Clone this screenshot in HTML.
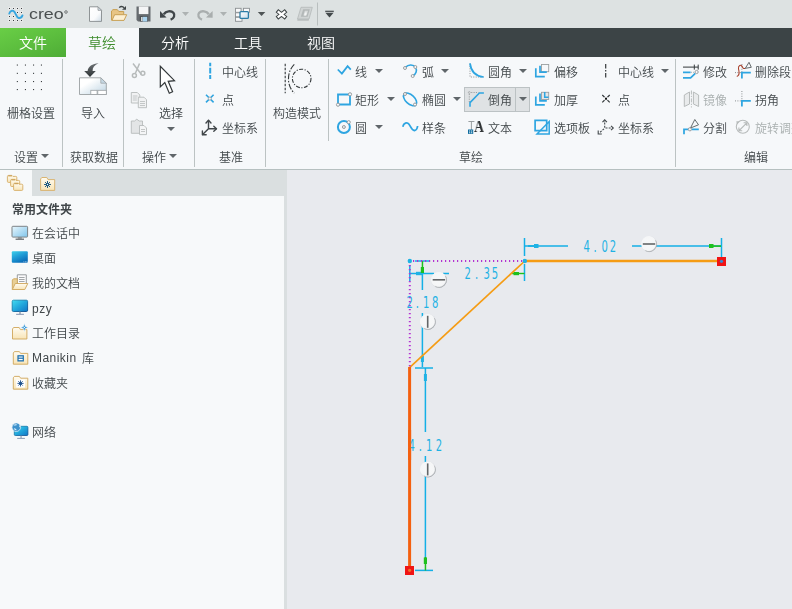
<!DOCTYPE html>
<html><head><meta charset="utf-8">
<style>
*{box-sizing:border-box;margin:0;padding:0}
html,body{width:792px;height:609px;overflow:hidden;background:#e8eaee}
body{position:relative;font-family:"Liberation Sans","Noto Sans CJK SC",sans-serif;font-size:12px;color:#41474a;font-weight:350}
.abs{position:absolute}
#title{left:0;top:0;width:792px;height:28px;background:#dde2e2}
#tabs{left:0;top:28px;width:792px;height:29px;background:#3c4446}
#tabfile{left:0;top:28px;width:66px;height:29px;background:linear-gradient(160deg,#69ce46,#5cbe3e 50%,#4eac36)}
#tabact{left:66px;top:28px;width:73px;height:29px;background:#f6f8fa}
.tab{will-change:transform;position:absolute;top:29px;height:29px;line-height:29px;font-size:14px;color:#fff;text-align:center;width:60px}
#ribbon{left:0;top:57px;width:792px;height:112px;background:#f6f8fa}
#ribline{left:0;top:169px;width:792px;height:1px;background:#b6c0c0}
.sep{position:absolute;width:1px;background:#bcc3c3;top:59px;height:107.5px}
.t{position:absolute;will-change:transform;white-space:nowrap;line-height:16px;height:16px;font-size:12px;color:#41474a;font-weight:350}
.c{transform:translateX(-50%)}
.g{color:#a9afaf}
.dd{position:absolute;margin-left:0.5px;width:0;height:0;border-left:4px solid transparent;border-right:4px solid transparent;border-top:4px solid #60666a}
#panelhead{left:0;top:170px;width:287px;height:26px;background:#dadfe0}
#panel{left:0;top:196px;width:284px;height:413px;background:#f7f9fa}
#paneledge{left:284px;top:196px;width:3px;height:413px;background:#dadfe0}
#ptab{left:0;top:170px;width:32px;height:26px;background:#f7f9fa}
svg{position:absolute;overflow:visible}
</style></head><body>
<div class="abs" id="title"></div>
<div class="abs" id="tabs"></div>
<div class="abs" id="tabfile"></div>
<div class="abs" id="tabact"></div>
<div class="tab" style="left:3px">文件</div>
<div class="tab" style="left:72px;color:#3d8c2b">草绘</div>
<div class="tab" style="left:145px">分析</div>
<div class="tab" style="left:218px">工具</div>
<div class="tab" style="left:290.5px">视图</div>
<div class="t" style="left:29px;top:4px;line-height:20px;height:20px;font-size:15px;color:#4a4f50;transform:scaleX(1.19);transform-origin:0 0">creo</div>


<!-- title bar icons -->
<svg style="left:0;top:0" width="792" height="28" viewBox="0 0 792 28">
<defs>
<linearGradient id="docg" x1="0" y1="0" x2="1" y2="1"><stop offset="0" stop-color="#ffffff"/><stop offset="0.6" stop-color="#fafbfc"/><stop offset="1" stop-color="#cfdce6"/></linearGradient>
<linearGradient id="wing" x1="0" y1="0" x2="1" y2="1"><stop offset="0" stop-color="#ffffff"/><stop offset="1" stop-color="#c8dcea"/></linearGradient>
</defs>
<!-- creo logo dots -->
<g><rect x="8" y="7" width="3" height="3" fill="#eceeee" opacity="0.7"/><rect x="9" y="8" width="1" height="1" fill="#3a3f41"/><rect x="12" y="7" width="3" height="3" fill="#eceeee" opacity="0.7"/><rect x="13" y="8" width="1" height="1" fill="#3a3f41"/><rect x="16" y="7" width="3" height="3" fill="#eceeee" opacity="0.7"/><rect x="17" y="8" width="1" height="1" fill="#3a3f41"/><rect x="20" y="7" width="3" height="3" fill="#eceeee" opacity="0.7"/><rect x="21" y="8" width="1" height="1" fill="#3a3f41"/><rect x="16" y="11" width="3" height="3" fill="#eceeee" opacity="0.7"/><rect x="17" y="12" width="1" height="1" fill="#3a3f41"/><rect x="20" y="11" width="3" height="3" fill="#eceeee" opacity="0.7"/><rect x="21" y="12" width="1" height="1" fill="#3a3f41"/><rect x="8" y="15" width="3" height="3" fill="#eceeee" opacity="0.7"/><rect x="9" y="16" width="1" height="1" fill="#3a3f41"/><rect x="12" y="15" width="3" height="3" fill="#eceeee" opacity="0.7"/><rect x="13" y="16" width="1" height="1" fill="#3a3f41"/><rect x="8" y="19" width="3" height="3" fill="#eceeee" opacity="0.7"/><rect x="9" y="20" width="1" height="1" fill="#3a3f41"/><rect x="12" y="19" width="3" height="3" fill="#eceeee" opacity="0.7"/><rect x="13" y="20" width="1" height="1" fill="#3a3f41"/><rect x="16" y="19" width="3" height="3" fill="#eceeee" opacity="0.7"/><rect x="17" y="20" width="1" height="1" fill="#3a3f41"/><rect x="20" y="19" width="3" height="3" fill="#eceeee" opacity="0.7"/><rect x="21" y="20" width="1" height="1" fill="#3a3f41"/></g>
<path d="M9.300 13.600C9.800 11.400 11.600 10.300 13.300 10.900C15.800 11.800 16 17.600 18.600 18C20.400 18.300 21.900 17 22.500 15.400" fill="none" stroke="#36a6e0" stroke-width="1.900" stroke-linecap="round"/>
<circle cx="66" cy="12" r="1.3" fill="none" stroke="#4a4f50" stroke-width="0.7"/>
<!-- new doc -->
<path d="M89.5 6.8H98L101.5 10.3V21.4H89.5Z" fill="url(#docg)" stroke="#8f9496" stroke-width="1"/>
<path d="M98 6.8V10.3H101.5Z" fill="#d5e0ea" stroke="#8f9496" stroke-width="0.8"/>
<!-- open folder -->
<path d="M111.500 20.400V11L113 9.600H117.300L118.800 11.500H123.700V14.600" fill="#e8c585" stroke="#c8a055" stroke-width="1"/>
<path d="M112 20.400L114.600 14.700H126.700L124 20.400Z" fill="#fdf0d4" stroke="#c8a055" stroke-width="1"/>
<path d="M119.200 7.600C120.500 6.200 122.500 6 124.200 7.800" fill="none" stroke="#3f4546" stroke-width="1.300"/>
<path d="M122 9.800H126V6Z" fill="#3f4546"/>
<!-- save -->
<path d="M136.5 6.5H150.5V21.5H138L136.5 20Z" fill="#666b6f"/>
<rect x="138.8" y="6.5" width="9.6" height="7.6" fill="#f4f5f6"/>
<rect x="139.8" y="16" width="8" height="5.5" fill="#4c5154"/>
<rect x="142.6" y="16.8" width="4.6" height="4.7" fill="#a9d3ee"/>
<rect x="141.2" y="17" width="1.2" height="4" fill="#f4f5f6"/>
<!-- undo -->
<path d="M163.8 14.2C166.0 11.0 171.0 10.2 173.4 12.8C175.4 15.2 174.0 18.4 170.6 19.7" fill="none" stroke="#41474a" stroke-width="2.4"/>
<path d="M160.0 11.0L160.0 17.8L166.6 17.4Z" fill="#41474a"/>
<path d="M182 12.100H189L185.500 16Z" fill="#adb2b2"/>
<!-- redo -->
<path d="M208.8 14.2C206.6 11.0 201.6 10.2 199.2 12.8C197.2 15.2 198.6 18.4 202.0 19.7" fill="none" stroke="#a9aeae" stroke-width="2.4"/>
<path d="M212.6 11.0L212.6 17.8L206.0 17.4Z" fill="#a9aeae"/>
<path d="M220 12.100H227L223.500 16Z" fill="#adb2b2"/>
<!-- windows -->
<g fill="#f8f9fa" stroke="#8b9092" stroke-width="0.9">
<rect x="235.500" y="8.300" width="5.600" height="4"/>
<rect x="243.500" y="8.300" width="6" height="4"/>
<rect x="235.500" y="12.800" width="5" height="4"/>
<rect x="235.500" y="17.300" width="6.500" height="4"/>
</g>
<rect x="240" y="11.600" width="8.400" height="6.800" rx="1" fill="url(#wing)" stroke="#2b7ca6" stroke-width="1.300"/>
<path d="M257.800 12H265.300L261.550 16Z" fill="#4e5455"/>
<!-- close X -->
<path d="M276.900 10.700L286.100 18.100M286.100 10.700L276.900 18.100" stroke="#3f4546" stroke-width="4.200" fill="none"/>
<path d="M277.700 11.350L285.300 17.450M285.300 11.350L277.700 17.450" stroke="#ffffff" stroke-width="2.300" fill="none"/>
<!-- grey icon -->
<path d="M301 7.300H312.300L309 19H297.500Z" fill="#d0d4d4" stroke="#b4b9b9" stroke-width="0.8"/>
<path d="M297.500 19L309 19L308.700 20.800H297.300Z" fill="#b9bebe"/>
<path d="M303.200 9.200H309.800L307.600 16.800H300.800Z" fill="#b3b8b8"/>
<path d="M304.800 10.800H308L306.600 15.600H303.400Z" fill="#d9dcdc"/>
<path d="M305 12.500H306.800L306 15.600H304.100Z" fill="#f2f3f3"/>
<rect x="317" y="2.500" width="1" height="23" fill="#b9bfbf"/>
<rect x="325.200" y="10.700" width="8.600" height="1.200" fill="#43494b"/>
<path d="M325.400 12.800H333.600L329.500 17.600Z" fill="#43494b"/>
</svg>

<div class="abs" id="ribbon"></div>
<div class="abs" id="ribline"></div>
<div class="sep" style="left:62px"></div>
<div class="sep" style="left:123px"></div>
<div class="sep" style="left:194px"></div>
<div class="sep" style="left:265px"></div>
<div class="sep" style="left:328px;height:82px"></div>
<div class="sep" style="left:675px"></div>

<!-- group 1 -->
<div class="t c" style="left:31px;top:106px">栅格设置</div>
<div class="t" style="left:14px;top:150px">设置</div><div class="dd" style="left:40px;top:154px"></div>
<!-- group 2 -->
<div class="t c" style="left:93px;top:106px">导入</div>
<div class="t c" style="left:94px;top:150px">获取数据</div>
<!-- group 3 -->
<div class="t c" style="left:171px;top:106px">选择</div><div class="dd" style="left:166px;top:127px"></div>
<div class="t" style="left:142px;top:150px">操作</div><div class="dd" style="left:168px;top:154px"></div>
<!-- group 4 -->
<div class="t" style="left:222px;top:65px">中心线</div>
<div class="t" style="left:222px;top:93px">点</div>
<div class="t" style="left:222px;top:121px">坐标系</div>
<div class="t c" style="left:231px;top:150px">基准</div>
<!-- group 5 -->
<div class="t c" style="left:297px;top:106px">构造模式</div>
<div class="t" style="left:355px;top:65px">线</div><div class="dd" style="left:374px;top:69px"></div>
<div class="t" style="left:355px;top:93px">矩形</div><div class="dd" style="left:386px;top:97px"></div>
<div class="t" style="left:355px;top:121px">圆</div><div class="dd" style="left:374px;top:125px"></div>
<div class="t" style="left:422px;top:65px">弧</div><div class="dd" style="left:440px;top:69px"></div>
<div class="t" style="left:422px;top:93px">椭圆</div><div class="dd" style="left:452px;top:97px"></div>
<div class="t" style="left:422px;top:121px">样条</div>
<div class="abs" style="left:464px;top:87px;width:66px;height:25px;background:#dfe2e4;border:1px solid #bcc2c4"></div>
<div class="abs" style="left:515px;top:87px;width:1px;height:25px;background:#bcc2c4"></div>
<div class="t" style="left:488px;top:65px">圆角</div><div class="dd" style="left:518px;top:69px"></div>
<div class="t" style="left:488px;top:93px">倒角</div><div class="dd" style="left:518px;top:97px"></div>
<div class="t" style="left:488px;top:121px">文本</div>
<div class="t" style="left:554px;top:65px">偏移</div>
<div class="t" style="left:554px;top:93px">加厚</div>
<div class="t" style="left:554px;top:121px">选项板</div>
<div class="t" style="left:618px;top:65px">中心线</div><div class="dd" style="left:660px;top:69px"></div>
<div class="t" style="left:618px;top:93px">点</div>
<div class="t" style="left:618px;top:121px">坐标系</div>
<div class="t c" style="left:471px;top:150px">草绘</div>
<!-- group 6 -->
<div class="t" style="left:703px;top:65px">修改</div>
<div class="t g" style="left:703px;top:93px">镜像</div>
<div class="t" style="left:703px;top:121px">分割</div>
<div class="t" style="left:755px;top:65px">删除段</div>
<div class="t" style="left:755px;top:93px">拐角</div>
<div class="t g" style="left:755px;top:121px">旋转调整大小</div>
<div class="t c" style="left:756px;top:150px">编辑</div>


<!-- ribbon icons -->
<svg style="left:0;top:57px" width="792" height="112" viewBox="0 57 792 112">
<defs>
<linearGradient id="impg" x1="0" y1="0" x2="1" y2="1"><stop offset="0.3" stop-color="#ffffff"/><stop offset="1" stop-color="#bcd3e2"/></linearGradient>
<linearGradient id="arrg" x1="0" y1="0" x2="0" y2="1"><stop offset="0" stop-color="#6d7275"/><stop offset="1" stop-color="#2e3335"/></linearGradient>
</defs>
<g fill="#3a3f41"><rect x="16.8" y="64.5" width="1.1" height="1.1"/><rect x="16.8" y="72.8" width="1.1" height="1.1"/><rect x="16.8" y="81.0" width="1.1" height="1.1"/><rect x="16.8" y="89.0" width="1.1" height="1.1"/><rect x="24.9" y="64.5" width="1.1" height="1.1"/><rect x="24.9" y="72.8" width="1.1" height="1.1"/><rect x="24.9" y="81.0" width="1.1" height="1.1"/><rect x="24.9" y="89.0" width="1.1" height="1.1"/><rect x="33.0" y="64.5" width="1.1" height="1.1"/><rect x="33.0" y="72.8" width="1.1" height="1.1"/><rect x="33.0" y="81.0" width="1.1" height="1.1"/><rect x="33.0" y="89.0" width="1.1" height="1.1"/><rect x="40.9" y="64.5" width="1.1" height="1.1"/><rect x="40.9" y="72.8" width="1.1" height="1.1"/><rect x="40.9" y="81.0" width="1.1" height="1.1"/><rect x="40.9" y="89.0" width="1.1" height="1.1"/></g>
<!-- import -->
<path d="M79.5 77.800H100.800L106.300 83.200V94.500H79.500Z" fill="url(#impg)" stroke="#9a9fa1" stroke-width="0.9"/>
<path d="M100.800 77.800V83.200H106.300Z" fill="#c5d8e4" stroke="#9a9fa1" stroke-width="0.7"/>
<rect x="90.800" y="90.300" width="6.300" height="4.200" fill="#fff" stroke="#9a9fa1" stroke-width="0.8"/>
<rect x="97.800" y="90.300" width="8.500" height="4.200" fill="#fff" stroke="#9a9fa1" stroke-width="0.8"/>
<path d="M98.500 63.200C92.500 63.600 88 66.500 87.600 71H84.200L90 77L95.800 71H92.600C92.400 67.500 94.500 64.800 98.500 63.200Z" fill="url(#arrg)"/>
<!-- scissors -->
<g fill="none" stroke="#b7bbbb" stroke-width="1.500">
<path d="M133 63.500L141.500 74.500M139.500 63.500L135.500 73"/>
<circle cx="134.400" cy="75.600" r="2"/><circle cx="142.800" cy="73.300" r="2"/>
</g>
<!-- copy -->
<g fill="#f1f2f3" stroke="#b7bbbb" stroke-width="0.9">
<path d="M131.300 92.500H137.300L139.800 95V103H131.300Z"/>
<path d="M138.300 97.200H144L146.500 99.700V107.700H138.300Z"/>
</g>
<g stroke="#b7bbbb" stroke-width="0.8"><path d="M132.800 96H137.500M132.800 98H136.800M132.800 100H136.800M140 101.500H145M140 103.500H145M140 105.500H145"/></g>
<!-- paste -->
<path d="M131.300 121H134.500L136.800 119.200L139.200 121H142.500V133.300H131.300Z" fill="#e3e5e6" stroke="#b7bbbb" stroke-width="0.9"/>
<path d="M139.500 125.500H144L146.500 128V134.600H139.500Z" fill="#f4f5f6" stroke="#b7bbbb" stroke-width="0.9"/>
<g stroke="#b7bbbb" stroke-width="0.8"><path d="M141 129.500H145M141 131.500H145"/></g>
<!-- cursor -->
<path d="M160.300 66.300V86.900L164.800 82.600L169.300 93.200L172.600 91.700L168.200 81.300L174.500 80.700Z" fill="#ffffff" stroke="#33383a" stroke-width="1.200" stroke-linejoin="miter"/>
<!-- datum centerline -->
<path d="M210.200 62.700V66.300M210.200 67.800V73.500M210.200 74.900V78.900" stroke="#2ea5e1" stroke-width="2" fill="none"/>
<!-- datum point -->
<path d="M206 94.800L213.600 102.400M213.600 94.800L206 102.400" stroke="#2ea5e1" stroke-width="1.600" fill="none"/>
<circle cx="209.800" cy="98.600" r="1.500" fill="#f6f8fa" stroke="#9a9fa1" stroke-width="0.8"/>
<!-- datum csys -->
<g fill="none" stroke="#41474a" stroke-width="1.400" stroke-linecap="round" stroke-linejoin="round">
<path d="M208.500 128.700V120.500M208.500 128.700H216.300M208.500 128.700L202.600 134.500"/>
<path d="M206 123L208.500 120.300L211 123M213.800 126.200L216.500 128.700L213.800 131.200M202.400 131V134.700H206.200"/>
</g>
<!-- construction mode -->
<g fill="none" stroke="#33383a" stroke-width="1.100">
<path d="M285.200 63.700V93.300" stroke-dasharray="2.500 1.500"/>
<path d="M294.300 64.300C286.500 72 286.500 85.500 294.300 93.200" stroke-dasharray="6 1.500 1.500 1.500"/>
<circle cx="301.700" cy="78.500" r="9.300" stroke-dasharray="4 1.500 1.200 1.500"/>
</g>
<!-- line -->
<path d="M337.800 69.500L341.900 73.600L347.600 66.200L350.800 69.600" fill="none" stroke="#2ea5e1" stroke-width="1.750"/>
<!-- rect -->
<path d="M338 94.500H350V104.500H338Z" fill="none" stroke="#2ea5e1" stroke-width="1.800"/>
<circle cx="350" cy="94.300" r="1.600" fill="#f6f8fa" stroke="#8f9496" stroke-width="0.9"/>
<circle cx="338" cy="104.700" r="1.600" fill="#f6f8fa" stroke="#8f9496" stroke-width="0.9"/>
<!-- circle -->
<circle cx="343.900" cy="127" r="6" fill="none" stroke="#2ea5e1" stroke-width="2"/>
<circle cx="343.900" cy="127" r="1.500" fill="#e6e8ea" stroke="#8f9496" stroke-width="0.9"/>
<circle cx="348.700" cy="122.200" r="1.600" fill="#f6f8fa" stroke="#8f9496" stroke-width="0.9"/>
<!-- arc -->
<path d="M405.500 67.300C408.500 64 413.500 64.300 415.600 67.600C417.500 70.600 415.800 74.300 413 75.700" fill="none" stroke="#2ea5e1" stroke-width="1.600"/>
<circle cx="405" cy="68" r="1.500" fill="#f6f8fa" stroke="#8f9496" stroke-width="0.9"/>
<circle cx="415.300" cy="67" r="1.500" fill="#f6f8fa" stroke="#8f9496" stroke-width="0.9"/>
<circle cx="412.700" cy="76" r="1.500" fill="#f6f8fa" stroke="#8f9496" stroke-width="0.9"/>
<!-- ellipse -->
<ellipse cx="410.100" cy="99.400" rx="8" ry="4.500" transform="rotate(43 410.100 99.400)" fill="none" stroke="#2ea5e1" stroke-width="1.600"/>
<circle cx="405" cy="94" r="1.500" fill="#f6f8fa" stroke="#8f9496" stroke-width="0.9"/>
<circle cx="415" cy="104.500" r="1.500" fill="#f6f8fa" stroke="#8f9496" stroke-width="0.9"/>
<!-- spline -->
<path d="M402.800 126.800C403.600 123 407 121.600 409 124.200C411 126.800 411.800 130.800 414.500 130.500C416.500 130.300 417.300 128.300 417.600 126" fill="none" stroke="#2ea5e1" stroke-width="1.800"/>
<!-- fillet -->
<path d="M470 63.500V77H483.500" fill="none" stroke="#8a8f91" stroke-width="1" stroke-dasharray="1 1.400"/>
<path d="M470 63.300C471 71.500 476 76.200 483.600 77" fill="none" stroke="#2ea5e1" stroke-width="1.750"/>
<!-- chamfer -->
<path d="M469.300 102V92.500H478.500" fill="none" stroke="#8a8f91" stroke-width="0.9" stroke-dasharray="1 1.300"/>
<circle cx="469.300" cy="92.500" r="0.900" fill="#f0f1f2" stroke="#8a8f91" stroke-width="0.6"/>
<path d="M470 106.700V102.600L479.400 93H483.900" fill="none" stroke="#2ea5e1" stroke-width="1.600"/>
<!-- text icon -->
<path d="M471.400 121.500V130M468.400 121.500H474.400" stroke="#8f9496" stroke-width="0.9" fill="none"/>
<rect x="468" y="129.500" width="5.200" height="4.400" fill="#0f6c9e"/>
<path d="M469.100 130.400h1.100v1.100h-1.100zM471.100 130.400h1.100v1.100h-1.100zM469.100 132.200h1.100v1.100h-1.100zM471.100 132.200h1.100v1.100h-1.100z" fill="#f2f9fd"/>
<!-- offset -->
<rect x="541.500" y="64.500" width="7.200" height="7.200" fill="none" stroke="#9a9fa1" stroke-width="0.9"/>
<path d="M535.800 68.300V76.700H544.800" fill="none" stroke="#2ea5e1" stroke-width="1.700"/>
<path d="M540 65.800V72.200H546.800" fill="none" stroke="#2ea5e1" stroke-width="1.700"/>
<!-- thicken -->
<rect x="541.500" y="92.300" width="7.200" height="7.200" fill="#e4e6e7" stroke="#9a9fa1" stroke-width="0.9"/>
<path d="M535.800 96.500V104.900H544.800" fill="none" stroke="#2ea5e1" stroke-width="1.700"/>
<path d="M540 93.600V100.800H546.800" fill="none" stroke="#2ea5e1" stroke-width="1.700"/>
<path d="M544.700 92V97.300H548.600" fill="none" stroke="#2ea5e1" stroke-width="1.500"/>
<!-- palette -->
<path d="M535.100 120.300H546.700V130.600H535.100Z" fill="none" stroke="#2ea5e1" stroke-width="1.700"/>
<path d="M549.200 121.500V134.100H537Z" fill="none" stroke="#2ea5e1" stroke-width="1.500" stroke-linejoin="miter"/>
<!-- sketch centerline -->
<path d="M605.700 64V78.500" stroke="#33383a" stroke-width="1.200" stroke-dasharray="4.500 1.500 1.500 1.500" fill="none"/>
<!-- sketch point -->
<path d="M602.300 95L609.700 102.400M609.700 95L602.300 102.400" stroke="#33383a" stroke-width="1.200" fill="none"/>
<circle cx="606" cy="98.700" r="2.100" fill="#f6f8fa"/><rect x="605" y="97.700" width="2" height="2" fill="#111"/>
<!-- sketch csys -->
<g fill="none" stroke="#41474a" stroke-width="1.100">
<path d="M604.700 127.800V121" stroke-dasharray="2 1.200"/>
<path d="M605.500 128H611" stroke-dasharray="2 1.200"/>
<path d="M604 128.800L599.500 132.800" stroke-dasharray="2 1.200"/>
<path d="M602.500 122.200L604.700 119.800L606.900 122.200M611 125.800L613.300 128L611 130.200M598.200 130.500V134H601.800"/>
</g>
<!-- modify -->
<path d="M683 67.100H698.200M694.300 64.600V69.600M698.200 64.600V69.600" stroke="#33383a" stroke-width="1" fill="none"/>
<path d="M683 72.300H690.600M683 77.800H690.600L695.300 73.300" stroke="#2ea5e1" stroke-width="1.700" fill="none"/>
<path d="M691 72.300H695" stroke="#9a9fa1" stroke-width="0.8" stroke-dasharray="1 1"/>
<circle cx="696.600" cy="72" r="1.600" fill="#f6f8fa" stroke="#8f9496" stroke-width="0.9"/>
<!-- delete segment -->
<path d="M735 72.600H741M741.900 64V72" stroke="#8a8f91" stroke-width="1" stroke-dasharray="1 1.400" fill="none"/>
<path d="M741.900 78.600V72.600H750.800" fill="none" stroke="#2ea5e1" stroke-width="1.750"/>
<path d="M736.800 76.500C740.500 75.500 739 71.500 738.500 68.800C738 65.500 741 64 742.300 66.800C743 68.500 744 69 745.500 68.200" fill="none" stroke="#a8402c" stroke-width="1.050"/>
<path d="M745.300 68.300L749 62.300L751.300 67.300Z" fill="#f6f8fa" stroke="#555b5d" stroke-width="0.9"/>
<!-- mirror -->
<g fill="#e9ebec" stroke="#b7bbbb" stroke-width="1">
<path d="M684.300 95L689.500 92V104L684.300 106.500Z"/><path d="M698.600 95L693.400 92V104L698.600 106.500Z"/>
</g>
<path d="M691.400 90.500V107.500" stroke="#b7bbbb" stroke-width="1" stroke-dasharray="4 1.300 1.300 1.300"/>
<!-- corner -->
<path d="M735 100.900H741M741.900 91V100" stroke="#8a8f91" stroke-width="1" stroke-dasharray="1 1.400" fill="none"/>
<path d="M741.900 106.500V100.900H750.800" fill="none" stroke="#2ea5e1" stroke-width="1.750"/>
<!-- divide -->
<path d="M684 134.300V129.300H688.300M691.600 129.300H698.800" fill="none" stroke="#2ea5e1" stroke-width="1.750"/>
<path d="M690.500 128L694.800 119.500L698.500 124.800Z" fill="#f6f8fa" stroke="#555b5d" stroke-width="0.9"/>
<circle cx="689.900" cy="129.300" r="1.600" fill="#f6f8fa" stroke="#8f9496" stroke-width="0.9"/>
<!-- rotate resize -->
<g fill="none" stroke="#b7bbbb" stroke-width="1.100">
<circle cx="742.800" cy="126.800" r="6.500"/><path d="M736.300 121.300L739.800 121.600L737 124.600Z" fill="#b7bbbb" stroke="none"/>
<path d="M739.200 130.500L746.600 123.100M743.600 122.800H746.900V126.100M742.200 130.800H738.900V127.500"/>
</g>
</svg>
<div class="t" style="left:473.500px;top:119px;font-family:'Liberation Serif',serif;font-weight:bold;font-size:16px;line-height:16px;color:#2e3234;transform:scaleX(0.86);transform-origin:0 0">A</div>

<!-- left panel -->
<div class="abs" id="panelhead"></div>
<div class="abs" id="panel"></div>
<div class="abs" id="paneledge"></div>
<div class="abs" id="ptab"></div>

<!-- panel icons -->
<svg style="left:0;top:170px" width="287" height="439" viewBox="0 170 287 439">
<defs>
<linearGradient id="mong" x1="0" y1="0" x2="1" y2="1"><stop offset="0" stop-color="#e9f7fd"/><stop offset="1" stop-color="#7fc4ea"/></linearGradient>
<linearGradient id="deskg" x1="0" y1="0" x2="0.6" y2="1"><stop offset="0" stop-color="#3cd0ea"/><stop offset="0.5" stop-color="#1e9cd6"/><stop offset="1" stop-color="#0a6cb8"/></linearGradient>
<linearGradient id="pcg" x1="0" y1="0" x2="1" y2="1"><stop offset="0" stop-color="#42dcf0"/><stop offset="0.5" stop-color="#22a8dc"/><stop offset="1" stop-color="#1276c6"/></linearGradient><linearGradient id="pcs" x1="0" y1="0" x2="1" y2="1"><stop offset="0" stop-color="#1a94b8"/><stop offset="1" stop-color="#0a4a90"/></linearGradient>
<linearGradient id="fold" x1="0" y1="0" x2="0" y2="1"><stop offset="0" stop-color="#fffcf2"/><stop offset="1" stop-color="#f8e4b6"/></linearGradient>
</defs>
<!-- tab icon 1: folder tree -->
<g fill="url(#fold)" stroke="#d6ae66" stroke-width="0.9">
<path d="M7.4 176.6Q7.4 175.4 8.6 175.4H11.9L12.9 176.4H15.8Q16.8 176.4 16.8 177.4V181.4Q16.8 182.4 15.8 182.4H8.4Q7.4 182.4 7.4 181.4Z"/><path d="M8.2 175.9H12.0" stroke="#c79c52" stroke-width="1"/>
<path d="M10.6 180.6Q10.6 179.4 11.8 179.4H15.1L16.1 180.4H18.7Q19.7 180.4 19.7 181.4V185.5Q19.7 186.5 18.7 186.5H11.6Q10.6 186.5 10.6 185.5Z"/><path d="M11.4 179.9H15.2" stroke="#c79c52" stroke-width="1"/>
<path d="M13.6 184.4Q13.6 183.2 14.8 183.2H18.1L19.1 184.2H21.8Q22.8 184.2 22.8 185.2V189.4Q22.8 190.4 21.8 190.4H14.6Q13.6 190.4 13.6 189.4Z"/><path d="M14.4 183.7H18.2" stroke="#c79c52" stroke-width="1"/>
</g>
<!-- tab icon 2: favorites folder -->
<path d="M40.600 190.400V179L41.800 177.500H46.800L48 179.600H54.700V190.400Z" fill="url(#fold)" stroke="#d6ae66" stroke-width="0.9"/>
<path d="M47.500 181V188M44 184.500H51M45 182L50 187M50 182L45 187" stroke="#0f4f7c" stroke-width="0.9"/>
<circle cx="47.500" cy="184.500" r="1.700" fill="#0f4f7c"/><circle cx="47.500" cy="184.500" r="0.700" fill="#fff"/>
<!-- in session monitor -->
<rect x="12" y="226.300" width="15.600" height="10.800" rx="0.800" fill="url(#mong)" stroke="#7d8386" stroke-width="1"/>
<path d="M17.800 237.300H21.800V238.600H17.800Z" fill="#7d8386"/><rect x="15.600" y="238.600" width="8.400" height="1.200" fill="#5c6265"/>
<!-- desktop -->
<rect x="11.800" y="251.300" width="16" height="11.400" rx="1" fill="url(#deskg)"/>
<path d="M23.500 261.800H24.300M25 261.800H25.800M26.500 261.800H27.300" stroke="#e8f6fd" stroke-width="0.7"/>
<!-- my docs -->
<path d="M17.300 274.800H26.300V286H17.300Z" fill="#fbfbfc" stroke="#8d9294" stroke-width="0.9"/>
<path d="M19 277.500H24.600M19 279.500H24.600M19 281.500H24.600" stroke="#8d9294" stroke-width="0.8"/>
<path d="M12.300 289.500V280L13.500 278.800H17.300V283.500" fill="#e8cf94" stroke="#cfa65a" stroke-width="0.9"/>
<path d="M12.300 289.500L15.300 283.500H27.800L24.800 289.500Z" fill="url(#fold)" stroke="#cfa65a" stroke-width="0.9"/>
<!-- pzy computer -->
<rect x="12.200" y="300.200" width="15.400" height="11.300" rx="1.200" fill="url(#pcg)" stroke="url(#pcs)" stroke-width="0.9"/>
<path d="M19.200 311.700H20.800V313.900H19.200Z" fill="#9aa6b8"/><rect x="16.100" y="313.800" width="7.800" height="1.100" fill="#8c9cb6"/>
<!-- work dir -->
<path d="M12.500 339V329L13.600 327.500H19.200L20.400 329.600H26.900V339Z" fill="url(#fold)" stroke="#cfa65a" stroke-width="0.9"/>
<path d="M24.400 323.600L25.400 326.500L28.300 327.500L25.400 328.500L24.400 331.400L23.400 328.500L20.500 327.500L23.400 326.500Z" fill="#1c8ad2" stroke="#f7f9fa" stroke-width="0.6"/>
<circle cx="24.400" cy="327.500" r="0.800" fill="#e8f6ff"/>
<!-- manikin -->
<path d="M13.300 364.200V353L14.400 351.600H19.400L20.600 353.400H27.800V364.200Z" fill="url(#fold)" stroke="#cfa65a" stroke-width="0.9"/>
<rect x="17.400" y="355.200" width="6.500" height="6.300" fill="#1b6fb0"/>
<rect x="18.600" y="356.500" width="4.100" height="1.100" fill="#fff"/><rect x="18.600" y="358.800" width="4.100" height="1.400" fill="#fff"/>
<!-- favorites -->
<path d="M13.300 389.200V377.800L14.400 376.400H19.400L20.600 378.200H27.800V389.200Z" fill="url(#fold)" stroke="#cfa65a" stroke-width="0.9"/>
<rect x="16.200" y="379.600" width="8.800" height="8" fill="#fff"/>
<path d="M20.500 380.300V386.500M17.400 383.400H23.600M18.300 381.200L22.700 385.600M22.700 381.200L18.300 385.600" stroke="#1c4f8c" stroke-width="0.9"/>
<circle cx="20.500" cy="383.400" r="1.300" fill="#1c4f8c"/>
<!-- network -->
<rect x="14.300" y="426.300" width="13.600" height="9.200" rx="1" fill="url(#pcg)" stroke="url(#pcs)" stroke-width="0.8"/>
<path d="M20.400 435.700H21.700V438H20.400Z" fill="#9aa6b8"/><rect x="17.200" y="437.900" width="7.700" height="1" fill="#8c9cb6"/>
<circle cx="16.300" cy="427.200" r="4.300" fill="#3e92cc" stroke="#f1f6fa" stroke-width="0.7"/>
<path d="M13.300 425.300C14.500 424 16.500 423.800 17.300 424.800C16.500 425.800 14.800 425.600 13.300 425.300ZM13.800 428.300C15 428 16.300 429 16.800 430.200C15.500 430.600 14.200 429.800 13.800 428.300ZM19 425C19.800 425.500 20.200 426.800 19.800 427.600C19.200 427 18.800 426 19 425Z" fill="#d8eefa"/>
</svg>

<div class="t" style="left:12px;top:202px;font-weight:bold">常用文件夹</div>
<div class="t" style="left:32px;top:226px">在会话中</div>
<div class="t" style="left:32px;top:251px">桌面</div>
<div class="t" style="left:32px;top:276px">我的文档</div>
<div class="t" style="left:32px;top:301px;letter-spacing:0.6px">pzy</div>
<div class="t" style="left:32px;top:326px">工作目录</div>
<div class="t" style="left:32px;top:350px;letter-spacing:0.45px">Manikin</div><div class="t" style="left:81.500px;top:351px">库</div>
<div class="t" style="left:32px;top:376px">收藏夹</div>
<div class="t" style="left:32px;top:425px">网络</div>


<!-- canvas sketch -->
<svg id="sk" style="left:287px;top:170px" width="505" height="439" viewBox="287 170 505 439">
<defs>
<radialGradient id="rg" cx="0.46" cy="0.46" r="0.56"><stop offset="0" stop-color="#f7f8f9"/><stop offset="0.8" stop-color="#f5f6f7"/><stop offset="0.9" stop-color="#dfe1e4"/><stop offset="1" stop-color="#a4a8ac"/></radialGradient>
</defs>
<g fill="none" stroke="#14b0e6" stroke-width="1.5">
<!-- 4.02 dim -->
<path d="M524.5 238V256M524.5 264V281M721.5 238V257"/>
<path d="M524.5 246H568M632 246H721.5"/>
<!-- 2.35 dim -->
<path d="M409.8 265V281" />
<path d="M409.8 273.4H434M443 273.4H449"/>
<!-- 2.18 dim -->
<path d="M415 261H430"/>
<path d="M422.4 272V290M422.4 313V367"/>
<path d="M415 368H433"/>
<!-- 4.12 dim -->
<path d="M425.4 368V432M425.4 456V558"/>
<path d="M415 570.4H433"/>
</g>
<!-- purple dotted -->
<!-- arrows -->
<g stroke="none" fill="#1fb2e4">
<rect x="528" y="245" width="7" height="2"/><rect x="534" y="244" width="4.5" height="4"/>
<rect x="416" y="271.8" width="6.5" height="3.4"/>
<rect x="420.9" y="356" width="3" height="6"/>
<rect x="423.9" y="374" width="3" height="7"/>
</g>
<g stroke="none" fill="#1ec01e">
<rect x="709" y="244" width="4.5" height="4"/><rect x="713" y="245.3" width="8" height="1.6"/>
<rect x="513.5" y="272" width="5.5" height="3.2"/><rect x="512" y="272.8" width="12.5" height="1.4"/>
<rect x="421.7" y="261" width="1.5" height="12"/><rect x="420.8" y="267" width="3.2" height="6"/>
<rect x="424.7" y="557" width="1.5" height="13.5"/><rect x="423.8" y="557.5" width="3.2" height="6.5"/>
</g>
<!-- geometry -->
<path d="M409.8 367.3L524.8 261" stroke="#f59c14" stroke-width="1.7" fill="none"/>
<path d="M524.8 261H721" stroke="#f59c14" stroke-width="2.6" fill="none"/>
<path d="M409.6 367V571" stroke="#f4600f" stroke-width="3" fill="none"/>
<rect x="717" y="257" width="9" height="9" fill="#f01414"/>
<rect x="405" y="566" width="9" height="9" fill="#f01414"/>
<circle cx="721.5" cy="261.3" r="1.6" fill="#3a8ad0"/>
<circle cx="409.6" cy="570.3" r="1.6" fill="#f0702a"/>
<circle cx="409.8" cy="261" r="2.2" fill="#1fb2e4"/>
<circle cx="524.8" cy="261" r="2.2" fill="#1fb2e4"/>
<!-- constraint symbols -->
<g>
<circle cx="649.0" cy="244.0" r="7.9" fill="url(#rg)"/><path d="M655.50 240.25A7.5 7.5 0 0 1 645.25 250.50" fill="none" stroke="#9ea2a6" stroke-width="0.7" opacity="0.8"/><rect x="642.80" y="243.20" width="12.4" height="1.6" fill="#646668"/>
<circle cx="438.9" cy="279.8" r="7.9" fill="url(#rg)"/><path d="M445.40 276.05A7.5 7.5 0 0 1 435.15 286.30" fill="none" stroke="#9ea2a6" stroke-width="0.7" opacity="0.8"/><rect x="432.70" y="279.00" width="12.4" height="1.6" fill="#646668"/>
<circle cx="427.8" cy="321.8" r="7.9" fill="url(#rg)"/><path d="M434.30 318.05A7.5 7.5 0 0 1 424.05 328.30" fill="none" stroke="#9ea2a6" stroke-width="0.7" opacity="0.8"/><rect x="426.90" y="315.80" width="1.6" height="12" fill="#646668"/>
<circle cx="427.8" cy="469.4" r="7.9" fill="url(#rg)"/><path d="M434.30 465.65A7.5 7.5 0 0 1 424.05 475.90" fill="none" stroke="#9ea2a6" stroke-width="0.7" opacity="0.8"/><rect x="426.90" y="463.40" width="1.6" height="12" fill="#646668"/>
</g>
<!-- dimension text -->
<g font-family="'DejaVu Sans Condensed','DejaVu Sans','Liberation Sans',sans-serif" font-size="16.2" fill="#1fb2e4">
<text transform="translate(583.5,252.3) scale(0.69,1)" x="0.0 14.5 26.1 38.0" y="0">4.02</text>
<text transform="translate(464.5,278.8) scale(0.69,1)" x="0.0 15.2 27.5 39.6" y="0">2.35</text>
<text transform="translate(406.6,307.6) scale(0.69,1)" x="0.0 13.3 23.9 36.7" y="0">2.18</text>
<text transform="translate(408.5,450.9) scale(0.69,1)" x="0.0 14.8 25.4 39.4" y="0">4.12</text>
</g>
<path d="M413 261H524" stroke="#b432d2" stroke-width="2" stroke-dasharray="1.2 2.8" fill="none"/>
<path d="M409.8 265V367" stroke="#b432d2" stroke-width="2" stroke-dasharray="1.2 2.8" fill="none"/>
<path d="M409.6 430V460" stroke="#f4600f" stroke-width="3" fill="none"/>
</svg>

</body></html>
